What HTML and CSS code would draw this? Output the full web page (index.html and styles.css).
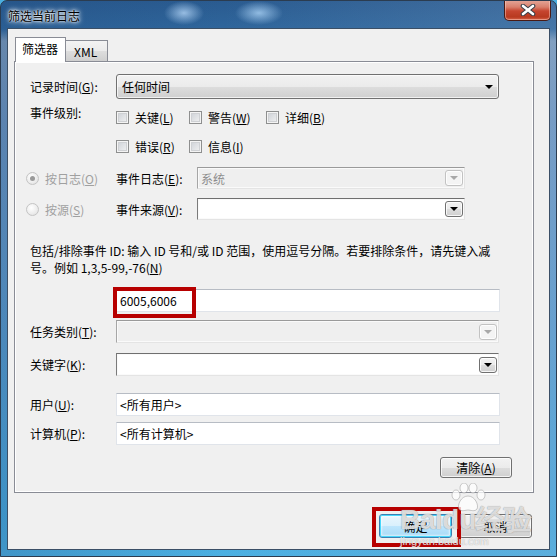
FILE: index.html
```html
<!DOCTYPE html>
<html lang="zh">
<head>
<meta charset="utf-8">
<title>筛选当前日志</title>
<link rel="stylesheet" href="styles.css">
</head>
<body>
<div class="window">
  <div class="titlebar">
    <span class="title">筛选当前日志</span>
    <div class="close">
      <svg width="16" height="12" viewBox="0 0 16 12">
        <path d="M3 2 L13 10 M13 2 L3 10" stroke="#3a3f48" stroke-width="4.6" stroke-linecap="round" fill="none"/>
        <path d="M3 2 L13 10 M13 2 L3 10" stroke="#ffffff" stroke-width="2.6" stroke-linecap="round" fill="none"/>
      </svg>
    </div>
  </div>
  <div class="client">
    <div class="tabs">
      <div class="tab active">筛选器</div>
      <div class="tab">XML</div>
    </div>
    <div class="panel">
      <div class="row r-time">
        <span class="lbl">记录时间(<u>G</u>):</span>
        <div class="ddl"><span>任何时间</span><i class="tri"></i></div>
      </div>
      <div class="row r-level">
        <span class="lbl lbl-up">事件级别:</span>
        <div class="checks">
          <span class="chk"><i class="box"></i>关键(<u>L</u>)</span>
          <span class="chk"><i class="box"></i>警告(<u>W</u>)</span>
          <span class="chk"><i class="box"></i>详细(<u>B</u>)</span>
        </div>
      </div>
      <div class="row r-level2">
        <span class="lbl"></span>
        <div class="checks">
          <span class="chk"><i class="box"></i>错误(<u>R</u>)</span>
          <span class="chk"><i class="box"></i>信息(<u>I</u>)</span>
        </div>
      </div>
      <div class="row r-radio r-radio1">
        <span class="radio-item"><i class="radio on"></i>按日志(<u>O</u>)</span>
        <span class="lbl2">事件日志(<u>E</u>):</span>
        <div class="combo disabled short"><span>系统</span><i class="cbtn"><i class="tri"></i></i></div>
      </div>
      <div class="row r-radio r-radio2">
        <span class="radio-item"><i class="radio"></i>按源(<u>S</u>)</span>
        <span class="lbl2">事件来源(<u>V</u>):</span>
        <div class="combo short"><span></span><i class="cbtn"><i class="tri"></i></i></div>
      </div>
      <p class="desc">包括/排除事件 ID: 输入 ID 号和/或 ID 范围，使用逗号分隔。若要排除条件，请先键入减<br>号。例如 1,3,5-99,-76(<u>N</u>)</p>
      <div class="row r-id">
        <span class="lbl"></span>
        <div class="textbox">6005,6006</div>
      </div>
      <div class="row r-task">
        <span class="lbl">任务类别(<u>T</u>):</span>
        <div class="combo disabled"><span></span><i class="cbtn"><i class="tri"></i></i></div>
      </div>
      <div class="row r-key">
        <span class="lbl">关键字(<u>K</u>):</span>
        <div class="combo"><span></span><i class="cbtn"><i class="tri"></i></i></div>
      </div>
      <div class="row r-user">
        <span class="lbl">用户(<u>U</u>):</span>
        <div class="textbox">&lt;所有用户&gt;</div>
      </div>
      <div class="row r-comp">
        <span class="lbl">计算机(<u>P</u>):</span>
        <div class="textbox">&lt;所有计算机&gt;</div>
      </div>
      <div class="row r-clear">
        <button class="btn clear">清除(<u>A</u>)</button>
      </div>
    </div>
    <div class="footer">
      <button class="btn default">确定</button>
      <button class="btn">取消</button>
    </div>
  </div>
  <div class="mark mark-id"></div>
  <div class="mark mark-ok"></div>
  <div class="watermark">
    <svg class="paw" width="40" height="30" viewBox="0 0 40 30">
      <g fill="rgba(255,255,255,0.75)" stroke="rgba(140,140,140,0.45)" stroke-width="1">
        <ellipse cx="8" cy="12" rx="4" ry="5"/>
        <ellipse cx="16" cy="5" rx="4" ry="5"/>
        <ellipse cx="25" cy="5" rx="4" ry="5"/>
        <ellipse cx="33" cy="12" rx="4" ry="5"/>
        <path d="M20 13 C13 13 9 22 11 26 C13 29 18 27 20 27 C22 27 27 29 29 26 C31 22 27 13 20 13 Z"/>
      </g>
    </svg>
    <span class="wm-big">Bai<span class="wm-du">du</span>经验</span>
    <span class="wm-small">jingyan.baidu.com</span>
  </div>
</div>
</body>
</html>
```
FILE: styles.css
```css
* { box-sizing: border-box; }
html, body { margin: 0; padding: 0; background: #4aaee0; }
body {
  font-family: "Noto Sans CJK SC", "Noto Sans", sans-serif;
  font-size: 12px;
  color: #000;
}
u { text-decoration: underline; text-underline-offset: 1px; }

.window {
  position: relative;
  width: 557px;
  height: 557px;
  display: flex;
  flex-direction: column;
  border: 1px solid #2b3c50;
  border-radius: 7px 7px 0 0;
  overflow: hidden;
  background:
    radial-gradient(ellipse 20px 12px at 183px 12px, rgba(170,205,240,0.85), rgba(170,205,240,0) 100%),
    radial-gradient(ellipse 24px 12px at 258px 12px, rgba(170,210,245,0.8), rgba(170,210,245,0) 100%),
    linear-gradient(to right, rgba(30,70,120,0.25) 0%, rgba(30,70,120,0) 40%, rgba(140,170,205,0.25) 100%),
    linear-gradient(to bottom, #2a5b90 0px, #2f669c 28px, #7f9dbd 40px, #6f97c2 120px, #5c9dcf 320px, #48ace0 520px, #4cb0e2 557px);
}

.titlebar {
  height: 27px;
  flex: none;
  display: flex;
  align-items: center;
  padding-left: 7px;
}
.title {
  font-size: 12px;
  color: #000;
  text-shadow: 0 0 6px #fff, 0 0 4px #fff, 0 0 2px #fff;
  margin-top: 2px;
}
.close {
  position: absolute;
  top: -1px;
  right: 5px;
  width: 47px;
  height: 21px;
  border: 1px solid #4a1a14;
  border-top: none;
  border-radius: 0 0 5px 5px;
  background: linear-gradient(to bottom, #e5a89a 0%, #d9806d 35%, #c6452f 55%, #b8391f 85%, #d8644a 100%);
  box-shadow: inset 0 0 0 1px rgba(255,220,210,0.45);
  display: flex;
  align-items: center;
  justify-content: center;
}

.client {
  flex: none;
  margin: 0 6px 0 6px;
  height: 522px;
  border: 1px solid #3b4f66;
  background: #f0f0f0;
  display: flex;
  flex-direction: column;
}

.tabs {
  display: flex;
  align-items: flex-end;
  height: 24px;
  margin: 8px 0 0 7px;
  position: relative;
  z-index: 2;
}
.tab {
  height: 21px;
  padding: 0 10px 0 8px;
  border: 1px solid #898c95;
  border-bottom: none;
  border-left: none;
  background: linear-gradient(to bottom, #f3f3f3 0%, #ebebeb 50%, #dddddd 51%, #cfcfcf 100%);
  display: flex;
  align-items: center;
  font-size: 12px;
  line-height: 1;
  padding-top: 1px;
}
.tab.active {
  height: 25px;
  margin-bottom: -1px;
  border-left: 1px solid #898c95;
  background: #ffffff;
  padding: 0 7px 3px 6px;
  align-items: center;
}

.panel {
  margin-left: 6px;
  width: 520px;
  height: 432px;
  border: 1px solid #898c95;
  box-shadow: inset 0 0 0 1px #ffffff;
  background: #f0f0f0;
  padding-left: 15px;
  display: flex;
  flex-direction: column;
  position: relative;
  z-index: 1;
}

.row {
  display: flex;
  align-items: center;
  flex: none;
}
.lbl {
  width: 86px;
  flex: none;
  white-space: nowrap;
}
.lbl-up { align-self: flex-start; margin-top: -4px; line-height: 20px; }

.r-time { margin-top: 12px; height: 25px; }
.r-level { margin-top: 8px; height: 20px; align-items: flex-start; }
.r-level .checks { height: 20px; }
.r-level2 { margin-top: 9px; height: 20px; }
.r-radio { margin-left: -4px; height: 22px; }
.r-radio1 { margin-top: 11px; }
.r-radio2 { margin-top: 9px; }
.r-id { margin-top: 13px; height: 23px; }
.r-task { margin-top: 8px; height: 23px; }
.r-key { margin-top: 10px; height: 23px; }
.r-user { margin-top: 17px; height: 23px; }
.r-comp { margin-top: 6px; height: 23px; }
.r-clear { margin-top: 12px; height: 21px; justify-content: flex-end; padding-right: 21px; }

.ddl {
  width: 383px;
  height: 25px;
  border: 1px solid #707070;
  border-radius: 3px;
  background: linear-gradient(to bottom, #f2f2f2 0%, #ebebeb 50%, #dddddd 51%, #cfcfcf 100%);
  box-shadow: inset 0 0 0 1px rgba(255,255,255,0.7);
  display: flex;
  align-items: center;
  justify-content: space-between;
  padding: 0 4px 0 5px;
}
.tri {
  display: block;
  width: 0;
  height: 0;
  border-left: 4px solid transparent;
  border-right: 4px solid transparent;
  border-top: 4px solid #000;
}
.ddl .tri { margin-right: 1px; }

.checks {
  display: grid;
  grid-template-columns: 73px 77px auto;
  align-items: center;
}
.chk {
  display: flex;
  align-items: center;
  white-space: nowrap;
}
.box {
  display: block;
  width: 13px;
  height: 13px;
  margin-right: 6px;
  border: 1px solid #8e8f8f;
  background: linear-gradient(135deg, #cbcfd5 0%, #f4f4f4 100%);
  box-shadow: inset 0 0 0 1px #f4f4f4, inset 0 0 0 2px #cfd1d4;
}

.radio-item {
  width: 90px;
  flex: none;
  display: flex;
  align-items: center;
  color: #a0a0a0;
  white-space: nowrap;
}
.radio {
  display: block;
  width: 13px;
  height: 13px;
  border-radius: 50%;
  border: 1px solid #c4c4c4;
  background: radial-gradient(circle at 40% 35%, #ffffff 0%, #ececec 60%, #dadada 100%);
  margin-right: 6px;
  position: relative;
}
.radio.on::after {
  content: "";
  position: absolute;
  left: 3px;
  top: 3px;
  width: 5px;
  height: 5px;
  border-radius: 50%;
  background: #9a9a9a;
}
.lbl2 { width: 81px; flex: none; white-space: nowrap; }

.combo {
  width: 383px;
  height: 23px;
  background: #ffffff;
  border-top: 1px solid #6f6f6f;
  border-left: 1px solid #7a7a7a;
  border-right: 1px solid #e4e4e4;
  border-bottom: 1px solid #e4e4e4;
  box-shadow: inset 0 0 0 1px #fafafa;
  display: flex;
  align-items: center;
  justify-content: space-between;
  padding: 0 1px 0 3px;
}
.combo.short { width: 268px; height: 22px; }
.combo.disabled {
  background: #efefef;
  border-top-color: #9a9a9a;
  border-left-color: #a6a6a6;
  color: #8d8d8d;
}
.cbtn {
  display: flex;
  align-items: center;
  justify-content: center;
  width: 18px;
  height: 16px;
  border: 1px solid #707070;
  border-radius: 3px;
  background: linear-gradient(to bottom, #f2f2f2 0%, #ebebeb 50%, #dddddd 51%, #cfcfcf 100%);
  box-shadow: inset 0 0 0 1px rgba(255,255,255,0.8);
}
.combo.disabled .cbtn {
  border-color: #c2c2c2;
  background: #f4f4f4;
}
.combo.disabled .tri { border-top-color: #a8a8a8; }

.desc {
  margin: 22px 0 0 0;
  line-height: 17px;
  white-space: nowrap;
}

.textbox {
  width: 384px;
  height: 23px;
  background: #ffffff;
  border: 1px solid #e0e4ea;
  border-top-color: #b7bcc4;
  display: flex;
  align-items: center;
  padding-left: 3px;
  white-space: nowrap;
}

.btn {
  font-family: inherit;
  font-size: 12px;
  color: #000;
  height: 21px;
  width: 72px;
  border: 1px solid #707070;
  border-radius: 3px;
  background: linear-gradient(to bottom, #f2f2f2 0%, #ebebeb 50%, #dddddd 51%, #cfcfcf 100%);
  box-shadow: inset 0 0 0 1px rgba(255,255,255,0.75);
  padding: 0;
  display: flex;
  align-items: center;
  justify-content: center;
}
.footer {
  display: flex;
  justify-content: flex-end;
  gap: 7px;
  margin-top: 21px;
  padding-right: 17px;
}
.footer .btn { width: 73px; height: 24px; }
.btn.default {
  border-color: #3c7fb1;
  background: linear-gradient(to bottom, #eaf6fd 0%, #d9f0fc 50%, #bee6fd 51%, #a7d9f5 100%);
  box-shadow: inset 0 0 0 1px #48d7fb, inset 0 0 2px 2px rgba(255,255,255,0.6);
}

.mark {
  position: absolute;
  border: 4px solid #b70000;
  z-index: 5;
}
.mark-id { left: 112px; top: 286px; width: 83px; height: 31px; }
.mark-ok { left: 371px; top: 506px; width: 89px; height: 40px; }

.watermark {
  position: absolute;
  left: 399px;
  top: 482px;
  z-index: 6;
  display: flex;
  flex-direction: column;
  pointer-events: none;
}
.paw { margin-left: 48px; margin-bottom: -8px; }
.wm-big {
  font-family: "Liberation Sans", sans-serif;
  font-size: 28px;
  font-weight: bold;
  line-height: 30px;
  color: rgba(255,255,255,0.7);
  text-shadow: 0 0 1px rgba(120,120,120,0.6), 0 0 1px rgba(120,120,120,0.6);
  letter-spacing: -0.5px;
}
.wm-du { letter-spacing: 0; }
.wm-small {
  font-family: "Liberation Sans", sans-serif;
  font-size: 11px;
  line-height: 12px;
  color: rgba(255,255,255,0.8);
  text-shadow: 0 0 1px rgba(110,110,110,0.7);
  margin-top: 0;
}
```
